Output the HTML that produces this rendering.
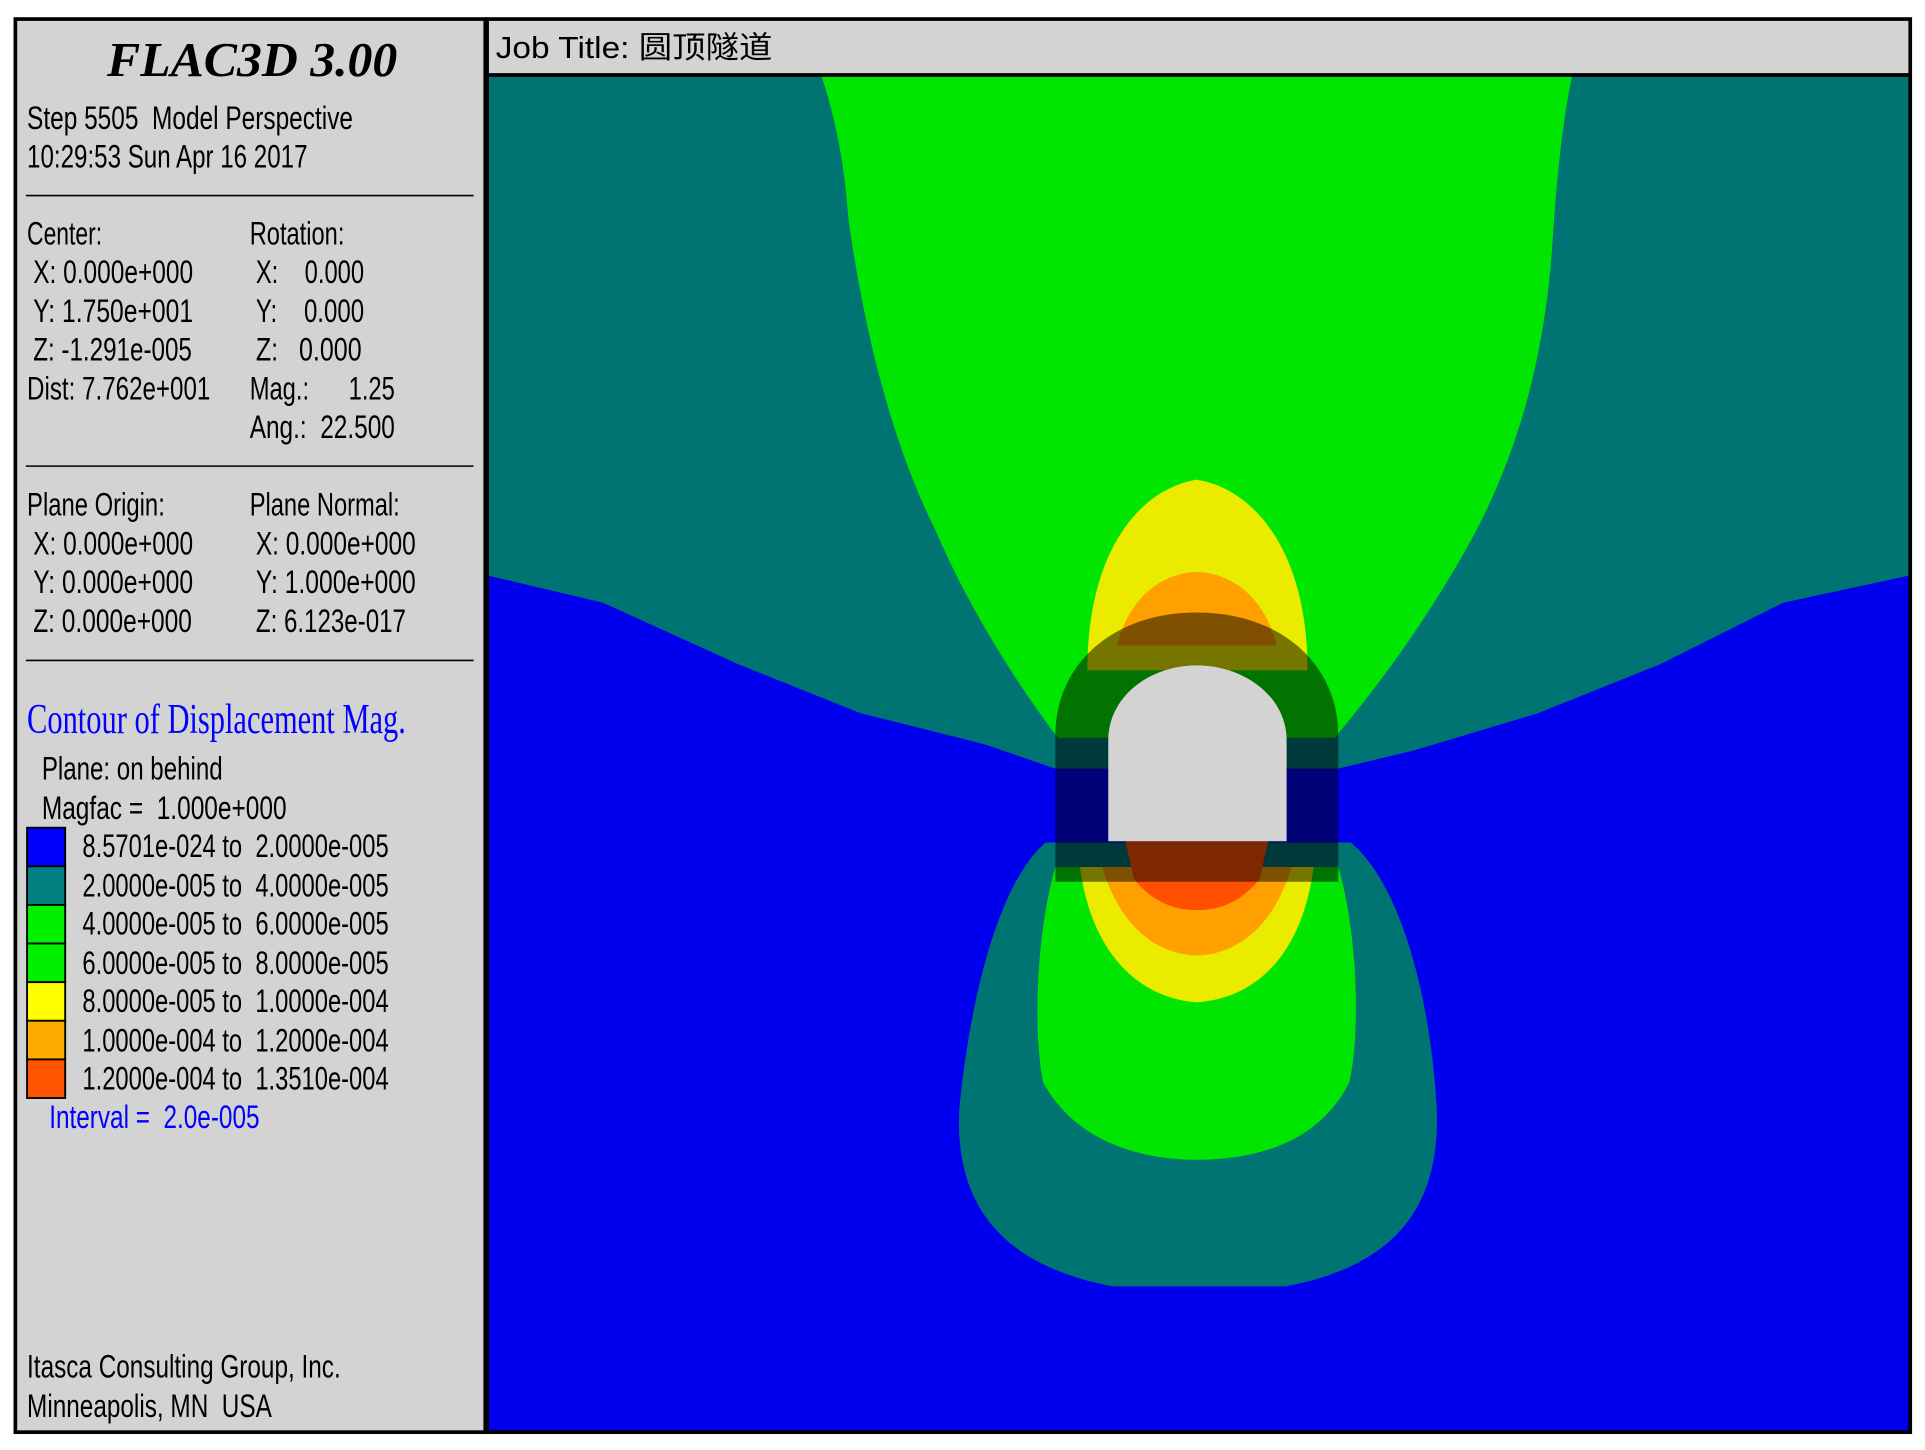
<!DOCTYPE html>
<html><head><meta charset="utf-8"><style>
html,body{margin:0;padding:0;background:#fff;width:1925px;height:1450px;overflow:hidden}
svg{display:block}
text{font-family:"Liberation Sans","Noto Sans CJK SC",sans-serif;fill:#000}
.s{font-size:26px}
</style></head><body>
<svg width="1925" height="1450" viewBox="0 0 1565 1179" preserveAspectRatio="none" xmlns="http://www.w3.org/2000/svg">
<rect x="0" y="0" width="1565" height="1179" fill="#fff"/>
<rect x="12.5" y="15.5" width="382" height="1149" fill="#d3d3d3" stroke="#000" stroke-width="3"/>
<rect x="396" y="15" width="1157" height="1150" fill="#0000ee"/>
<g>
<polygon fill="#007373" points="397,62 1552,62 1552,468 1450,490 1350,540 1250,580 1150,610 1088,625 858,625 800,605 700,580 600,540 490,490 397,468"/>
<path fill="#00e600" d="M668,62 L1278,62 C1270,100 1265,150 1262,200 C1255,300 1230,380 1190,450 C1150,520 1110,570 1085,600 L860,600 C830,560 790,500 760,430 C720,350 700,250 690,180 C686,130 680,100 668,62 Z"/>
<path fill="#ebeb00" d="M884,545 C884,450 925,398 973,390 C1021,398 1063,450 1063,545 Z"/>
<path fill="#ffa000" d="M908,525 C918,485 945,466 973,465 C1001,466 1028,485 1038,525 Z"/>
<path fill="#007373" d="M850,685 C815,715 790,800 780,900 C775,985 820,1030 905,1046 L1045,1046 C1130,1030 1172,985 1168,900 C1162,800 1135,715 1098,685 Z"/>
<path fill="#00e600" d="M858,705 C842,760 840,840 848,880 C875,930 930,943 973,943 C1020,943 1072,930 1097,880 C1106,840 1104,760 1088,705 Z"/>
<path fill="#ebeb00" d="M878,705 C888,780 930,812 973,815 C1018,812 1058,780 1068,705 Z"/>
<path fill="#ffa000" d="M896,705 C912,758 944,776 973,777 C1002,776 1034,758 1050,705 Z"/>
<path fill="#ff5000" d="M915,684 L922,715 C938,734 955,740 973,740 C991,740 1008,734 1024,715 L1031,684 Z"/>
<path fill="#000" fill-opacity="0.5" d="M858,717 L858,598 C858,540 905,498 973,498 C1041,498 1088,540 1088,598 L1088,717 Z"/>
<path fill="#d3d3d3" d="M901,684 L901,602 C901,566 935,541 973,541 C1011,541 1046,566 1046,602 L1046,684 Z"/>
</g>
<rect x="397" y="16" width="1155" height="45" fill="#d3d3d3"/>
<line x1="396" y1="61" x2="1553" y2="61" stroke="#000" stroke-width="3"/>
<rect x="396" y="15.5" width="1157" height="1149" fill="none" stroke="#000" stroke-width="3"/>
<text x="403" y="47" style="font-size:25px" textLength="225" lengthAdjust="spacingAndGlyphs">Job Title: 圆顶隧道</text>

<text x="205" y="62" text-anchor="middle" style="font-family:'Liberation Serif',serif;font-weight:bold;font-style:italic;font-size:40px" textLength="236" lengthAdjust="spacingAndGlyphs">FLAC3D 3.00</text>
<text class="s" x="22" y="105" textLength="265" lengthAdjust="spacingAndGlyphs" xml:space="preserve">Step 5505  Model Perspective</text>
<text class="s" x="22" y="136" textLength="228" lengthAdjust="spacingAndGlyphs">10:29:53 Sun Apr 16 2017</text>
<line x1="21" y1="159" x2="385" y2="159" stroke="#000" stroke-width="1.3"/>
<text class="s" x="22" y="199" textLength="61" lengthAdjust="spacingAndGlyphs">Center:</text>
<text class="s" x="203" y="199" textLength="77" lengthAdjust="spacingAndGlyphs">Rotation:</text>
<text class="s" x="27" y="230" textLength="130" lengthAdjust="spacingAndGlyphs">X: 0.000e+000</text>
<text class="s" x="27" y="262" textLength="130" lengthAdjust="spacingAndGlyphs">Y: 1.750e+001</text>
<text class="s" x="27" y="293" textLength="129" lengthAdjust="spacingAndGlyphs">Z: -1.291e-005</text>
<text class="s" x="22" y="325" textLength="149" lengthAdjust="spacingAndGlyphs">Dist: 7.762e+001</text>
<text class="s" x="208" y="230" textLength="88" lengthAdjust="spacingAndGlyphs" xml:space="preserve">X:    0.000</text>
<text class="s" x="208" y="262" textLength="88" lengthAdjust="spacingAndGlyphs" xml:space="preserve">Y:    0.000</text>
<text class="s" x="208" y="293" textLength="86" lengthAdjust="spacingAndGlyphs" xml:space="preserve">Z:   0.000</text>
<text class="s" x="203" y="325" textLength="118" lengthAdjust="spacingAndGlyphs" xml:space="preserve">Mag.:      1.25</text>
<text class="s" x="203" y="356" textLength="118" lengthAdjust="spacingAndGlyphs" xml:space="preserve">Ang.:  22.500</text>
<line x1="21" y1="379" x2="385" y2="379" stroke="#000" stroke-width="1.3"/>
<text class="s" x="22" y="419" textLength="112" lengthAdjust="spacingAndGlyphs">Plane Origin:</text>
<text class="s" x="203" y="419" textLength="122" lengthAdjust="spacingAndGlyphs">Plane Normal:</text>
<text class="s" x="27" y="451" textLength="130" lengthAdjust="spacingAndGlyphs">X: 0.000e+000</text>
<text class="s" x="27" y="482" textLength="130" lengthAdjust="spacingAndGlyphs">Y: 0.000e+000</text>
<text class="s" x="27" y="514" textLength="129" lengthAdjust="spacingAndGlyphs">Z: 0.000e+000</text>
<text class="s" x="208" y="451" textLength="130" lengthAdjust="spacingAndGlyphs">X: 0.000e+000</text>
<text class="s" x="208" y="482" textLength="130" lengthAdjust="spacingAndGlyphs">Y: 1.000e+000</text>
<text class="s" x="208" y="514" textLength="122" lengthAdjust="spacingAndGlyphs">Z: 6.123e-017</text>
<line x1="21" y1="537" x2="385" y2="537" stroke="#000" stroke-width="1.3"/>
<text x="22" y="596" style="font-family:'Liberation Serif',serif;font-size:34px;fill:#0000ff" textLength="308" lengthAdjust="spacingAndGlyphs">Contour of Displacement Mag.</text>
<text class="s" x="34" y="634" textLength="147" lengthAdjust="spacingAndGlyphs">Plane: on behind</text>
<text class="s" x="34" y="666" textLength="199" lengthAdjust="spacingAndGlyphs" xml:space="preserve">Magfac =  1.000e+000</text>
<g stroke="#000" stroke-width="1.5">
<rect x="22" y="673" width="31" height="31.4" fill="#0000ff"/>
<rect x="22" y="704.4" width="31" height="31.4" fill="#008080"/>
<rect x="22" y="735.8" width="31" height="31.4" fill="#00f000"/>
<rect x="22" y="767.2" width="31" height="31.4" fill="#00f000"/>
<rect x="22" y="798.6" width="31" height="31.4" fill="#ffff00"/>
<rect x="22" y="830" width="31" height="31.4" fill="#ffaa00"/>
<rect x="22" y="861.4" width="31" height="31.4" fill="#ff5500"/>
</g>
<text class="s" x="67" y="697" textLength="249" lengthAdjust="spacingAndGlyphs" xml:space="preserve">8.5701e-024 to  2.0000e-005</text>
<text class="s" x="67" y="729" textLength="249" lengthAdjust="spacingAndGlyphs" xml:space="preserve">2.0000e-005 to  4.0000e-005</text>
<text class="s" x="67" y="760" textLength="249" lengthAdjust="spacingAndGlyphs" xml:space="preserve">4.0000e-005 to  6.0000e-005</text>
<text class="s" x="67" y="792" textLength="249" lengthAdjust="spacingAndGlyphs" xml:space="preserve">6.0000e-005 to  8.0000e-005</text>
<text class="s" x="67" y="823" textLength="249" lengthAdjust="spacingAndGlyphs" xml:space="preserve">8.0000e-005 to  1.0000e-004</text>
<text class="s" x="67" y="855" textLength="249" lengthAdjust="spacingAndGlyphs" xml:space="preserve">1.0000e-004 to  1.2000e-004</text>
<text class="s" x="67" y="886" textLength="249" lengthAdjust="spacingAndGlyphs" xml:space="preserve">1.2000e-004 to  1.3510e-004</text>
<text class="s" x="40" y="917" style="fill:#0000ff" textLength="171" lengthAdjust="spacingAndGlyphs" xml:space="preserve">Interval =  2.0e-005</text>
<text class="s" x="22" y="1120" textLength="255" lengthAdjust="spacingAndGlyphs">Itasca Consulting Group, Inc.</text>
<text class="s" x="22" y="1152" textLength="199" lengthAdjust="spacingAndGlyphs" xml:space="preserve">Minneapolis, MN  USA</text>
</svg>
</body></html>
